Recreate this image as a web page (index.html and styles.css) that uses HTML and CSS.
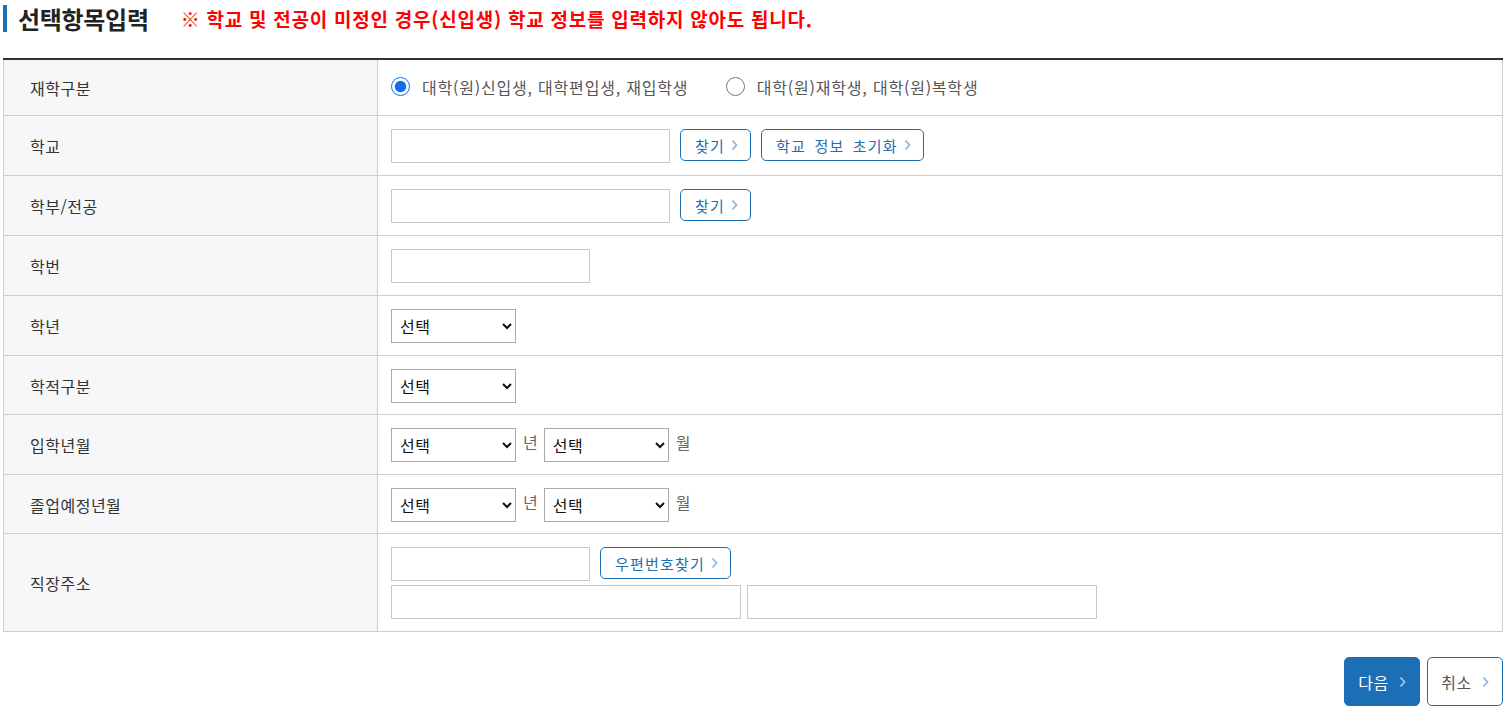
FILE: index.html
```html
<!DOCTYPE html>
<html lang="ko">
<head>
    <meta charset="UTF-8">
    <meta name="viewport" content="width=device-width, initial-scale=1.0">
    <title>선택항목입력</title>
    <link rel="stylesheet" href="styles.css">
</head>
<body>
    <div class="wrap">
        <div class="title-row">
            <h2 class="title">선택항목입력</h2>
            <p class="notice">※ 학교 및 전공이 미정인 경우(신입생) 학교 정보를 입력하지 않아도 됩니다.</p>
        </div>

        <table class="form-table">
            <tr>
                <th>재학구분</th>
                <td class="radio-cell">
                    <label class="radio"><input type="radio" name="status" checked> 대학(원)신입생, 대학편입생, 재입학생</label>
                    <label class="radio"><input type="radio" name="status"> 대학(원)재학생, 대학(원)복학생</label>
                </td>
            </tr>
            <tr>
                <th>학교</th>
                <td>
                    <div class="line">
                        <input type="text" class="txt w-long">
                        <button class="btn-line">찾기<svg viewBox="0 0 7 12"><path d="M1.5 1.5l4 4.5-4 4.5"/></svg></button>
                        <button class="btn-line">학교 정보 초기화<svg viewBox="0 0 7 12"><path d="M1.5 1.5l4 4.5-4 4.5"/></svg></button>
                    </div>
                </td>
            </tr>
            <tr>
                <th>학부/전공</th>
                <td>
                    <div class="line">
                        <input type="text" class="txt w-long">
                        <button class="btn-line">찾기<svg viewBox="0 0 7 12"><path d="M1.5 1.5l4 4.5-4 4.5"/></svg></button>
                    </div>
                </td>
            </tr>
            <tr>
                <th>학번</th>
                <td><div class="line"><input type="text" class="txt w-mid"></div></td>
            </tr>
            <tr>
                <th>학년</th>
                <td><div class="line"><select class="sel"><option>선택</option></select></div></td>
            </tr>
            <tr class="tight">
                <th>학적구분</th>
                <td><div class="line"><select class="sel"><option>선택</option></select></div></td>
            </tr>
            <tr>
                <th>입학년월</th>
                <td>
                    <div class="line">
                        <select class="sel"><option>선택</option></select><span class="unit">년</span>
                        <select class="sel"><option>선택</option></select><span class="unit">월</span>
                    </div>
                </td>
            </tr>
            <tr class="tight">
                <th>졸업예정년월</th>
                <td>
                    <div class="line">
                        <select class="sel"><option>선택</option></select><span class="unit">년</span>
                        <select class="sel"><option>선택</option></select><span class="unit">월</span>
                    </div>
                </td>
            </tr>
            <tr>
                <th>직장주소</th>
                <td class="addr-cell">
                    <div class="line">
                        <input type="text" class="txt w-mid">
                        <button class="btn-line">우편번호찾기<svg viewBox="0 0 7 12"><path d="M1.5 1.5l4 4.5-4 4.5"/></svg></button>
                    </div>
                    <div class="line addr">
                        <input type="text" class="txt w-addr">
                        <input type="text" class="txt w-addr">
                    </div>
                </td>
            </tr>
        </table>

        <div class="bottom-btns">
            <button class="btn-big primary">다음<svg viewBox="0 0 7 12"><path d="M1.5 1.5l4 4.5-4 4.5"/></svg></button>
            <button class="btn-big">취소<svg viewBox="0 0 7 12"><path d="M1.5 1.5l4 4.5-4 4.5"/></svg></button>
        </div>
    </div>
</body>
</html>
```

FILE: styles.css
```css
body {
    margin: 0;
    font-family: "Noto Sans CJK KR", "Noto Sans", sans-serif;
    color: #333;
    background: #fff;
}
.wrap {
    width: 1500px;
    margin-left: 3px;
}
.title-row {
    display: flex;
    align-items: center;
    margin-top: 5px;
    height: 27px;
    border-left: 4px solid #1a6fb5;
    padding-left: 11px;
}
.title {
    margin: 0;
    font-size: 24px;
    font-weight: bold;
    color: #222;
    letter-spacing: -0.3px;
}
.notice {
    margin: 0 0 0 32px;
    font-size: 19px;
    font-weight: bold;
    color: #f00;
    letter-spacing: 0.75px;
}
.form-table {
    width: 100%;
    margin-top: 26px;
    border-collapse: collapse;
    border-top: 2px solid #333;
}
.form-table th,
.form-table td {
    border: 1px solid #cfcfcf;
    border-top: 0;
    padding: 13px 13px 12px;
    vertical-align: middle;
    text-align: left;
}
.form-table th {
    width: 334px;
    padding-left: 26px;
    background: #f7f7f9;
    font-size: 16px;
    letter-spacing: 0.5px;
    font-weight: normal;
    color: #333;
}
.form-table .tight td,
.form-table .tight th {
    padding-bottom: 11px;
}
.radio-cell {
    height: 30px;
}
.addr-cell {
    padding-bottom: 13px;
}
.radio {
    display: inline-flex;
    align-items: center;
    gap: 12px;
    margin-right: 33px;
    font-size: 16px;
    letter-spacing: 0.8px;
    color: #555;
}
.radio input {
    width: 19px;
    height: 19px;
    margin: 0;
    accent-color: #0b6ff0;
}
.line {
    display: flex;
    align-items: center;
    gap: 10px;
}
.line.addr {
    margin-top: 4px;
    gap: 6px;
}
.txt {
    box-sizing: border-box;
    height: 34px;
    border: 1px solid #c8c8c8;
    padding: 0 8px;
    margin: 0;
    font-size: 15px;
}
.w-long { width: 279px; }
.w-mid { width: 199px; }
.w-addr { width: 350px; }
.sel {
    box-sizing: border-box;
    width: 125px;
    height: 34px;
    border: 1px solid #aaa;
    border-radius: 0;
    background: #fff;
    padding: 0 4px;
    margin: 0;
    font-size: 16px;
    letter-spacing: 0.5px;
    font-family: "Noto Sans CJK KR", sans-serif;
    color: #111;
}
.unit {
    margin: 0 -4px 6px -3px;
    font-size: 16px;
    color: #666;
}
.btn-line {
    display: inline-flex;
    align-items: center;
    gap: 6px;
    box-sizing: border-box;
    height: 32px;
    margin-top: -2px;
    padding: 0 12px 0 14px;
    border: 1px solid #1a6fb5;
    border-radius: 5px;
    background: #fff;
    color: #1a6fb5;
    font-size: 15px;
    letter-spacing: 1.2px;
    word-spacing: 3px;
    font-family: "Noto Sans CJK KR", sans-serif;
}
.btn-line svg,
.btn-big svg {
    width: 7px;
    height: 12px;
    fill: none;
    stroke: #8fb6de;
    stroke-width: 1.8;
}
.bottom-btns {
    display: flex;
    justify-content: flex-end;
    gap: 7px;
    margin-top: 25px;
}
.btn-big {
    display: inline-flex;
    align-items: center;
    justify-content: center;
    gap: 10px;
    box-sizing: border-box;
    width: 76px;
    height: 49px;
    border: 1px solid #1a6fb5;
    border-radius: 5px;
    background: #fff;
    color: #555;
    font-size: 16px;
    letter-spacing: 0.5px;
    font-family: "Noto Sans CJK KR", sans-serif;
}
.btn-big.primary {
    background: #1a6fb5;
    color: #fff;
}
.btn-big.primary svg {
    stroke: #a9c8e8;
}
```
